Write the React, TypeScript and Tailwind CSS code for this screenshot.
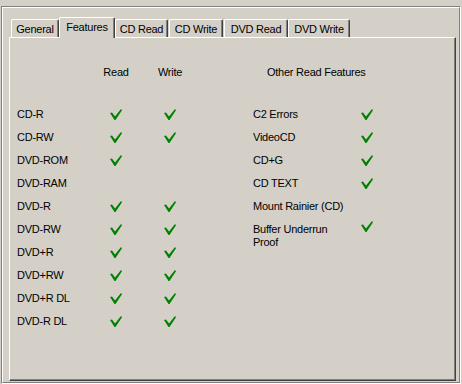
import React from 'react';

const MEDIA: [string, boolean, boolean][] = [
  ['CD-R', true, true],
  ['CD-RW', true, true],
  ['DVD-ROM', true, false],
  ['DVD-RAM', false, false],
  ['DVD-R', true, true],
  ['DVD-RW', true, true],
  ['DVD+R', true, true],
  ['DVD+RW', true, true],
  ['DVD+R DL', true, true],
  ['DVD-R DL', true, true],
];

const OTHER: [string, boolean][] = [
  ['C2 Errors', true],
  ['VideoCD', true],
  ['CD+G', true],
  ['CD TEXT', true],
  ['Mount Rainier (CD)', false],
];

function Check() {
  return (
    <svg width="12" height="11" viewBox="0 0 12 11" className="block">
      <path d="M0 4 L2 3.5 L5 7.5 L11 0 L12 1.2 L5.5 11 L4.5 11 Z" fill="#008000" />
    </svg>
  );
}

function Tab({ label, className }: { label: string; className: string }) {
  return (
    <div
      className={
        'flex justify-center items-start pt-[3px] border-t border-l border-r border-t-white border-l-white border-r-[#404040] rounded-t-[2px] shadow-[inset_-1px_0_0_#808080] ' +
        className
      }
    >
      {label}
    </div>
  );
}

export default function App() {
  return (
    <div
      className="w-[462px] h-[384px] bg-[#d4d0c8] pl-[1px] pt-[6px] text-[11px] text-black leading-[13px] tracking-[-0.25px]"
      style={{ fontFamily: '"Liberation Sans", Arial, sans-serif' }}
    >
      <div className="w-[460px] h-[378px] border border-t-[#808080] border-l-[#808080] border-r-white border-b-white">
        <div className="h-full border border-t-white border-l-white border-r-[#808080] border-b-[#808080] pl-[6px] pt-[9px]">
          {/* tab strip */}
          <div className="flex items-end h-[20px] pl-[2px]">
            <Tab label="General" className="w-[48px] h-[18px]" />
            <div className="relative z-10 w-[56px] h-[21px] -mb-[1px] bg-[#d4d0c8] flex justify-center items-start pt-[3px] border-t border-l border-r border-t-white border-l-white border-r-[#404040] rounded-t-[2px] shadow-[inset_-1px_0_0_#808080]">
              Features
            </div>
            <Tab label="CD Read" className="w-[53px] h-[18px]" />
            <Tab label="CD Write" className="ml-[1px] w-[54px] h-[18px]" />
            <Tab label="DVD Read" className="ml-[1px] w-[64px] h-[18px]" />
            <Tab label="DVD Write" className="w-[62px] h-[18px]" />
          </div>

          {/* panel */}
          <div className="w-[447px] h-[344px] border border-t-white border-l-white border-r-[#404040] border-b-[#404040] shadow-[inset_-1px_-1px_0_#808080] pl-[7px] pt-[23px] flex">
            <div className="w-[236px]">
              <div className="flex items-center h-[23px]">
                <div className="w-[87px]" />
                <div className="w-[24px] flex justify-center">Read</div>
                <div className="ml-[30px] w-[24px] flex justify-center whitespace-nowrap">Write</div>
              </div>
              <div className="mt-[19px]">
                {MEDIA.map(([name, read, write]) => (
                  <div key={name} className="flex items-center h-[23px]">
                    <div className="w-[87px]">{name}</div>
                    <div className="w-[24px] flex justify-center">{read && <Check />}</div>
                    <div className="ml-[30px] w-[24px] flex justify-center">{write && <Check />}</div>
                  </div>
                ))}
              </div>
            </div>

            <div>
              <div className="flex items-center h-[23px] pl-[14px]">Other Read Features</div>
              <div className="mt-[19px]">
                {OTHER.map(([name, ok]) => (
                  <div key={name} className="flex items-center h-[23px]">
                    <div className="w-[102px] whitespace-nowrap">{name}</div>
                    <div className="w-[24px] flex justify-center">{ok && <Check />}</div>
                  </div>
                ))}
                <div className="flex items-start">
                  <div className="w-[102px] pt-[5px]">Buffer Underrun Proof</div>
                  <div className="w-[24px] flex justify-center pt-[3px]">
                    <Check />
                  </div>
                </div>
              </div>
            </div>
          </div>
        </div>
      </div>
    </div>
  );
}
